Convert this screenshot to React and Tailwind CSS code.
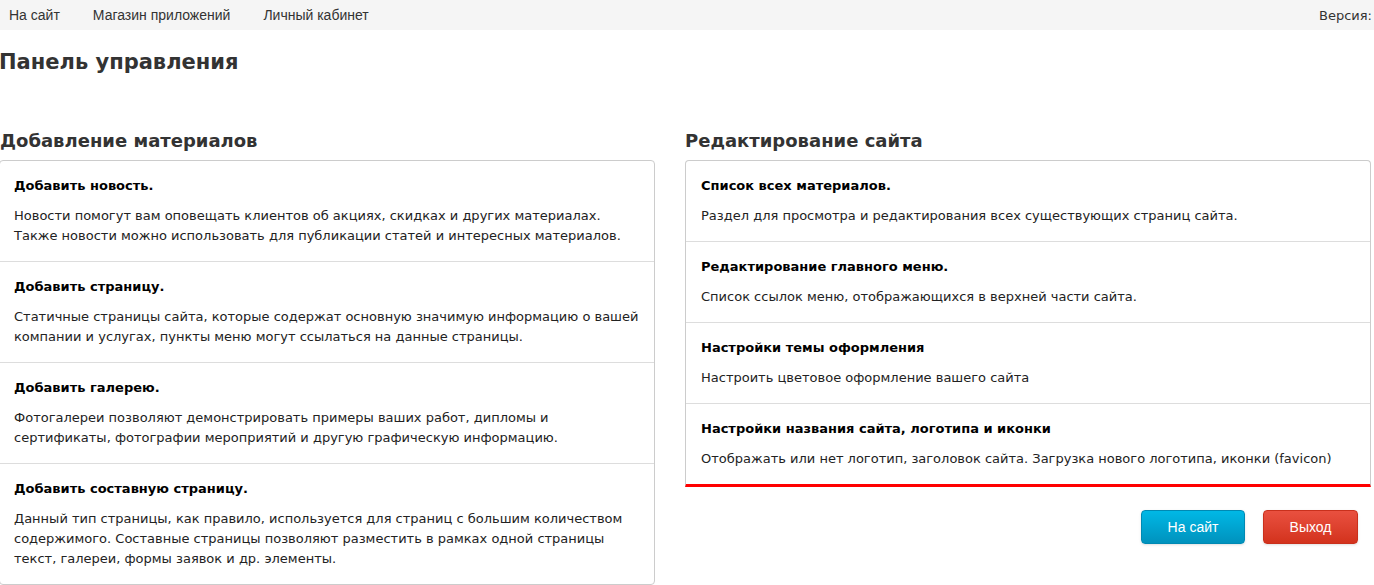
import React from "react";

const addItems = [
  {
    title: "Добавить новость.",
    text: "Новости помогут вам оповещать клиентов об акциях, скидках и других материалах. Также новости можно использовать для публикации статей и интересных материалов.",
  },
  {
    title: "Добавить страницу.",
    text: "Статичные страницы сайта, которые содержат основную значимую информацию о вашей компании и услугах, пункты меню могут ссылаться на данные страницы.",
  },
  {
    title: "Добавить галерею.",
    text: "Фотогалереи позволяют демонстрировать примеры ваших работ, дипломы и сертификаты, фотографии мероприятий и другую графическую информацию.",
  },
  {
    title: "Добавить составную страницу.",
    text: "Данный тип страницы, как правило, используется для страниц с большим количеством содержимого. Составные страницы позволяют разместить в рамках одной страницы текст, галереи, формы заявок и др. элементы.",
  },
];

const editItems = [
  {
    title: "Список всех материалов.",
    text: "Раздел для просмотра и редактирования всех существующих страниц сайта.",
  },
  {
    title: "Редактирование главного меню.",
    text: "Список ссылок меню, отображающихся в верхней части сайта.",
  },
  {
    title: "Настройки темы оформления",
    text: "Настроить цветовое оформление вашего сайта",
  },
  {
    title: "Настройки названия сайта, логотипа и иконки",
    text: "Отображать или нет логотип, заголовок сайта. Загрузка нового логотипа, иконки (favicon)",
  },
];

const Row = ({ item, last, left }) => (
  <a
    href="#"
    className={
      "block pt-[15px] pb-[15px] " +
      (left ? "pl-[14px] pr-[13px] " : "px-[15px] ") +
      (last ? "" : "border-b border-[#dddddd]")
    }
  >
    <div className="text-[13px] leading-[20px] font-bold text-black">{item.title}</div>
    <p className="mt-[10px] text-[13px] leading-[20px] text-[#222]">{item.text}</p>
  </a>
);

const App = () => {
  return (
    <div className="min-h-[585px] bg-white text-[#333] font-['DejaVu_Sans',sans-serif] overflow-hidden">
      {/* top bar */}
      <div className="flex h-[30px] items-center justify-between bg-[#f5f5f5] font-['Liberation_Sans',Arial,sans-serif] text-[14px] text-[#333]">
        <div className="flex items-center">
          <a href="#" className="pl-[9px] pr-[33px]">На сайт</a>
          <a href="#" className="pr-[33px]">Магазин приложений</a>
          <a href="#">Личный кабинет</a>
        </div>
        <div className="mt-[1px] pr-[2px] font-['DejaVu_Sans',sans-serif] text-[13px] whitespace-nowrap">
          Версия:
        </div>
      </div>

      <h1 className="mt-[18px] -ml-px text-[21px] leading-[28px] font-bold text-[#333]">
        Панель управления
      </h1>

      <div className="mt-[54px] flex gap-[30px] -ml-px">
        <div className="w-[656px] shrink-0">
          <h3 className="text-[18px] leading-[22px] font-bold text-[#333] ml-px">Добавление материалов</h3>
          <div className="mt-[8px] rounded-[4px] border border-[#cccccc] bg-white">
            {addItems.map((it, i) => (
              <Row key={i} item={it} left last={i === addItems.length - 1} />
            ))}
          </div>
        </div>

        <div className="w-[686px] shrink-0">
          <h3 className="text-[18px] leading-[22px] font-bold text-[#333]">Редактирование сайта</h3>
          <div className="mt-[8px] rounded-t-[4px] border border-[#cccccc] border-b-[3px] border-b-[#ff0000] bg-white">
            {editItems.map((it, i) => (
              <Row key={i} item={it} last={i === editItems.length - 1} />
            ))}
          </div>
          <div className="mt-[23px] flex justify-end gap-[18px] pr-[13px] font-['Liberation_Sans',Arial,sans-serif]">
            <button className="h-[34px] w-[104px] rounded-[4px] border border-[#0089b3] bg-gradient-to-b from-[#00b8e6] to-[#0092bd] text-[14px] text-white shadow-sm">
              На сайт
            </button>
            <button className="h-[34px] w-[95px] rounded-[4px] border border-[#c9301c] bg-gradient-to-b from-[#e9503f] to-[#d3321c] text-[14px] text-white shadow-sm">
              Выход
            </button>
          </div>
        </div>
      </div>
    </div>
  );
};

export default App;
